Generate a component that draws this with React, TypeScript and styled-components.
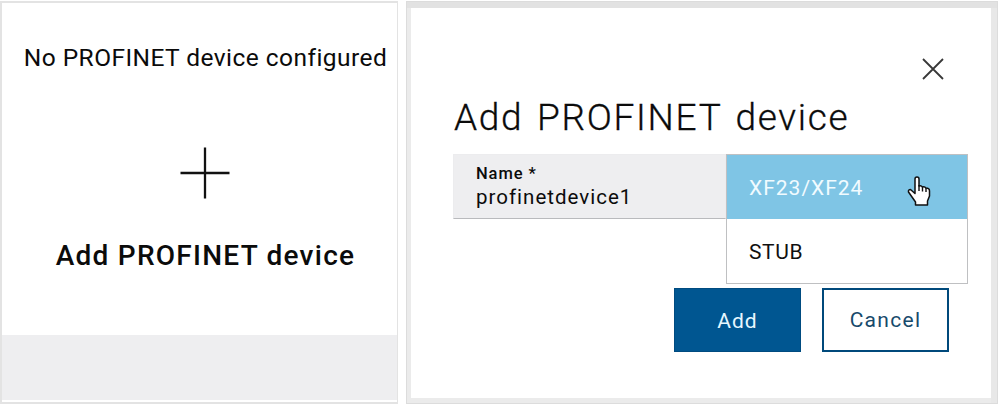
import React from "react";
import styled, { createGlobalStyle } from "styled-components";

const GlobalStyle = createGlobalStyle`
  * { box-sizing: border-box; }
  body { margin: 0; background: #fff; font-family: Roboto, "Liberation Sans", sans-serif; color: #0b0b0b; }
`;

const Page = styled.main`
  display: flex;
  gap: 8px;
  width: 999px;
  height: 404px;
  padding: 1px 0 0;
  overflow: hidden;
`;

const Card = styled.section`
  display: flex;
  flex-direction: column;
  align-items: center;
  width: 398px;
  height: 403px;
  border: 2px solid #e3e3e3;
  border-right-width: 1px;
  padding-bottom: 2px;
`;

const Text = styled.span<{ $size: number; $spacing?: number; $weight?: number; $line?: number }>`
  display: block;
  white-space: nowrap;
  font-size: ${(p) => p.$size}px;
  line-height: ${(p) => p.$line ?? p.$size}px;
  letter-spacing: ${(p) => p.$spacing ?? 0}px;
  font-weight: ${(p) => p.$weight ?? 400};
`;

const CardBody = styled.div`
  flex: 1;
  width: 100%;
  display: flex;
  flex-direction: column;
  align-items: center;
  padding-top: 40px;
  padding-left: 12px;
`;

const PlusIcon = styled.svg`
  width: 50px;
  height: 52px;
  margin: 74px 1px 0 0;
`;

const AddLabel = styled.div`
  margin: 41px 0 0 0;
`;

const CardFooter = styled.footer`
  width: 100%;
  height: 65px;
  background: #eeeef0;
`;

const Dialog = styled.section`
  width: 592px;
  height: 403px;
  padding: 0 30px 0 42px;
  border: 1px solid #dcdcdc;
  box-shadow: inset 0 6px #e2e2e2, inset 4px 0 #ebebeb, inset -6px 0 #e8e8e8, inset 0 -5px #ebebeb;
`;

const DialogTop = styled.div`
  display: flex;
  justify-content: flex-end;
  height: 96px;
  padding: 56px 23px 0 0;
`;

const CloseIcon = styled.svg`
  width: 22px;
  height: 22px;
`;

const Title = styled.h1`
  margin: 0 0 0 5px;
  height: 56px;
  word-spacing: 3px;
  -webkit-text-stroke: 0.3px #0b0b0b;
`;

const FormRow = styled.div`
  display: flex;
  height: 65px;
  margin-left: 4px;
`;

const NameField = styled.div`
  flex: 0 0 273px;
  padding: 10px 0 0 22px;
  background: #eeeef0;
  border: 1px solid #ececee;
  border-bottom-color: #b9babd;
`;

const OptionList = styled.div`
  width: 242px;
  height: 130px;
  flex: none;
  border: 1px solid #bfc0c2;
  background: #fff;
  z-index: 1;
`;

const Option = styled.div<{ $active?: boolean }>`
  display: flex;
  align-items: center;
  justify-content: space-between;
  height: 64px;
  padding: 3px 36px 0 22px;
  background: ${(p) => (p.$active ? "#7fc5e5" : "#fff")};
  color: ${(p) => (p.$active ? "#f1fbff" : "#101010")};
`;

const HandIcon = styled.svg`
  width: 24px;
  height: 30px;
  margin-top: 4px;
`;

const Actions = styled.div`
  display: flex;
  justify-content: flex-end;
  gap: 21px;
  margin: 69px 18px 0 0;
`;

const Button = styled.button<{ $primary?: boolean }>`
  display: flex;
  align-items: center;
  justify-content: center;
  width: 127px;
  height: 64px;
  font-family: inherit;
  border: ${(p) => (p.$primary ? "1px solid #004b80" : "2px solid #00497b")};
  background: ${(p) => (p.$primary ? "#005691" : "#fff")};
  color: ${(p) => (p.$primary ? "#e6f7ff" : "#174a6b")};
  padding: ${(p) => (p.$primary ? "2px 0 0" : 0)};
`;

export default function App() {
  return (
    <>
      <GlobalStyle />
      <Page>
        <Card>
          <CardBody>
            <Text $size={24.5} $spacing={0.45} $line={30}>No PROFINET device configured</Text>
            <PlusIcon viewBox="0 0 50 52">
              <path d="M0.5 26H49.5M25 0.5V51.5" stroke="#111" strokeWidth="2.3" />
            </PlusIcon>
            <AddLabel>
              <Text $size={28} $spacing={1.25} $weight={500} $line={32}>Add PROFINET device</Text>
            </AddLabel>
          </CardBody>
          <CardFooter />
        </Card>
        <Dialog>
          <DialogTop>
            <CloseIcon viewBox="0 0 22 22">
              <path d="M1 1L21 21M21 1L1 21" stroke="#383838" strokeWidth="1.8" />
            </CloseIcon>
          </DialogTop>
          <Title>
            <Text $size={37} $spacing={1.7} $weight={300} $line={40}>Add PROFINET device</Text>
          </Title>
          <FormRow>
            <NameField>
              <Text $size={16.5} $spacing={0.9} $weight={500} $line={18}>Name *</Text>
              <Text $size={20.5} $spacing={1} $line={29}>profinetdevice1</Text>
            </NameField>
            <OptionList>
              <Option $active>
                <Text $size={21} $spacing={1}>XF23/XF24</Text>
                <HandIcon viewBox="0 0 24 30">
                  <path
                    d="M8 17V3Q8 1 10 1Q12 1 12 3V10Q14 9 15.5 11Q17.5 10 19 12Q22.5 12 22.5 15V20L20.5 25V29H8.5V26L5 21L1.5 16Q1 13.5 3.5 13.5L8 17.5Z"
                    fill="#fff"
                    stroke="#111"
                    strokeWidth="1.5"
                    strokeLinejoin="round"
                  />
                  <path d="M12 9V15M15.5 11V15.5M19 12V16" stroke="#111" strokeWidth="1.4" />
                </HandIcon>
              </Option>
              <Option>
                <Text $size={21} $spacing={0.6}>STUB</Text>
              </Option>
            </OptionList>
          </FormRow>
          <Actions>
            <Button $primary>
              <Text $size={21} $spacing={1}>Add</Text>
            </Button>
            <Button>
              <Text $size={21} $spacing={1.3}>Cancel</Text>
            </Button>
          </Actions>
        </Dialog>
      </Page>
    </>
  );
}
